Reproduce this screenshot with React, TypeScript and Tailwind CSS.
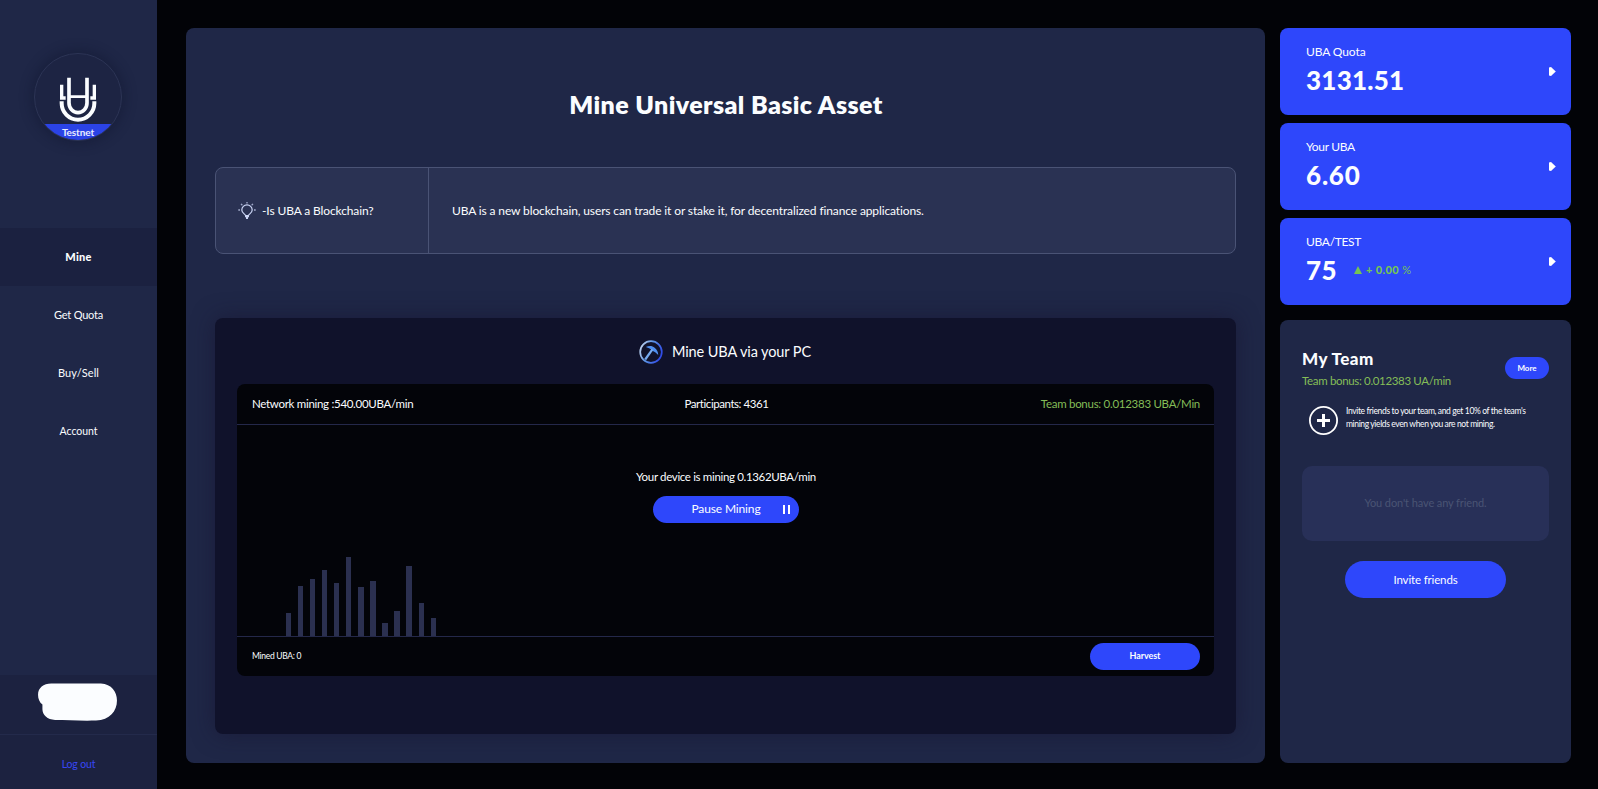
import type { ReactNode } from "react";

const navItems = [
	{ label: "Get Quota", className: "h-[58px] text-[11px] tracking-[-0.2px]" },
	{ label: "Buy/Sell", className: "h-[58px] text-[11px] tracking-[0.1px]" },
	{ label: "Account", className: "h-[60px] text-[10.5px] tracking-[-0.05px]" },
];

const bars = [23, 50, 57, 66, 53, 79, 49, 55, 13, 25, 70, 33, 18];

function Logo() {
	return (
		<div className="flex h-[88px] w-[88px] shrink-0 flex-col items-center justify-between overflow-hidden rounded-full border border-[#2c3455] bg-[#1d2443] shadow-[0_0_12px_3px_rgba(16,20,44,0.4)]">
			<svg
				aria-hidden="true"
				className="mt-[22px] h-[46px] w-[40px]"
				fill="none"
				stroke="#fbfdff"
				viewBox="176 138 120 138"
			>
				<path d="M209 143V219a27 29 0 0 0 54 0V143" strokeWidth="11" />
				<path d="M209 200H263" strokeWidth="8" />
				<path d="M187 164V204H199" strokeWidth="10" />
				<path d="M285 164V204H273" strokeWidth="10" />
				<path d="M187 214V220a49 49 0 0 0 98 0V214" strokeWidth="12" />
			</svg>
			<div className="flex h-4 w-full items-center justify-center bg-[#2b43e6] font-bold text-[#e8ecff] text-[10px] leading-none tracking-[-0.1px]">
				Testnet
			</div>
		</div>
	);
}

function Sidebar() {
	return (
		<aside className="flex w-[157px] shrink-0 flex-col items-center bg-[#1f2747]">
			<div className="h-[228px] pt-[53px] pr-px">
				<Logo />
			</div>
			<nav className="w-full text-center">
				<a className="flex h-[58px] items-center justify-center bg-[#1b2140] font-black text-[11px] tracking-[0.25px]">
					Mine
				</a>
				{navItems.map(({ label, className }) => (
					<a
						className={`flex items-center justify-center ${className}`}
						key={label}
					>
						{label}
					</a>
				))}
			</nav>
			<div className="mt-auto flex h-[114px] w-full flex-col bg-[#1c2240]">
				<div className="flex h-[60px] justify-center border-[#232a4b] border-b pt-2 pr-[2px]">
					<svg aria-hidden="true" className="h-[38px] w-[81px]" viewBox="0 0 82 39">
						<path
							d="M14 0.500H65C76 1 81.500 9 81.500 18C81.500 29 74 38 60 38.500C45 39 30 38 18 38C10 37.500 5 33 5 27V22C2 20 0.500 16 0.500 12C0.500 5 6 0.500 14 0.500Z"
							fill="#fbfdff"
						/>
					</svg>
				</div>
				<a className="flex flex-1 items-center justify-center pt-[6px] text-[#3846f5] text-[10.5px] tracking-[-0.15px]">
					Log out
				</a>
			</div>
		</aside>
	);
}

function BulbIcon() {
	return (
		<svg
			aria-hidden="true"
			className="h-[18px] w-[18px] shrink-0"
			fill="none"
			stroke="#ccd6f6"
			viewBox="0 0 18 18"
		>
			<path
				d="M7.500 13.500C7.200 12 3.800 11 3.800 7.900a5.200 5 0 0 1 10.400 0C14.200 11 10.800 12 10.500 13.500Z"
				strokeWidth="1.200"
			/>
			<path d="M7 14.300h4M8 16.200h2" strokeWidth="1.800" />
			<path
				d="M9 0v1.600M3 1.900l1.400 1.400M15 1.900l-1.400 1.400M0.300 8H2M16 8h1.700"
				opacity="0.75"
				strokeWidth="1.300"
			/>
		</svg>
	);
}

function PickaxeIcon() {
	return (
		<svg aria-hidden="true" className="h-6 w-6" fill="none" viewBox="0 0 24 24">
			<defs>
				<linearGradient id="pick" x1="0" x2="1" y1="0.2" y2="0.6">
					<stop offset="0" stopColor="#c3d4ee" />
					<stop offset="0.450" stopColor="#5a93e6" />
					<stop offset="1" stopColor="#2f4ae8" />
				</linearGradient>
			</defs>
			<circle cx="12" cy="12" r="10.800" stroke="url(#pick)" strokeWidth="1.700" />
			<path
				d="M6.800 7C10.500 5.300 13.500 5.900 15.600 7.800C18 9.700 19.200 12 19.200 15C17 12.600 15.300 11.500 13.500 10.700C11.800 9.200 9.700 7.900 6.800 7Z"
				fill="#4f8ff0"
			/>
			<path d="M13.400 9.300L6.200 19.500" stroke="#76aaf0" strokeWidth="2.200" />
		</svg>
	);
}

function MiningPanel() {
	return (
		<section className="flex h-[416px] flex-col rounded-lg bg-[#10122b] px-[22px] shadow-[0_0_22px_rgba(24,20,48,0.6)]">
			<h2 className="flex h-[66px] items-center justify-center gap-[9px] pt-[2px] pr-px text-[14.5px] tracking-[-0.1px]">
				<PickaxeIcon />
				Mine UBA via your PC
			</h2>
			<div className="flex h-[292px] flex-col rounded-lg bg-[#030409] text-[11.5px]">
				<div className="grid h-[41px] grid-cols-3 items-center border-[#24284a] border-b pr-[14px] pl-[15px]">
					<span className="tracking-[-0.3px]">Network mining :540.00UBA/min</span>
					<span className="pl-px text-center tracking-[-0.44px]">
						Participants: 4361
					</span>
					<span className="text-right text-[#84bd57] tracking-[-0.28px]">
						Team bonus: 0.012383 UBA/Min
					</span>
				</div>
				<div className="flex flex-1 flex-col items-center justify-between pt-[44px]">
					<div className="flex flex-col items-center gap-[11px] pl-px">
						<p className="leading-4 tracking-[-0.34px]">
							Your device is mining 0.1362UBA/min
						</p>
						<button
							className="grid h-[27px] w-[146px] grid-cols-[1fr_auto_1fr] items-center rounded-full bg-[#2e47fb] text-[12px] tracking-[-0.14px]"
							type="button"
						>
							<span />
							<span className="pb-px">Pause Mining</span>
							<span className="flex justify-end gap-[3px] pr-[9px]">
								<span className="h-[9px] w-[2px] bg-white" />
								<span className="h-[9px] w-[2px] bg-white" />
							</span>
						</button>
					</div>
					<div className="flex h-20 w-full items-end gap-[6.600px] pl-[48.500px]">
						{bars.map((height, index) => (
							<div
								className="w-[5.500px] bg-[#2b3050]"
								key={index}
								style={{ height }}
							/>
						))}
					</div>
				</div>
				<div className="flex h-10 items-center justify-between border-[#24284a] border-t pr-[14px] pl-[15px]">
					<span className="text-[8.500px] tracking-[-0.3px]">Mined UBA: 0</span>
					<button
						className="h-[27px] w-[110px] rounded-full bg-[#2e47fb] pb-px font-bold text-[9px] tracking-[-0.1px]"
						type="button"
					>
						Harvest
					</button>
				</div>
			</div>
		</section>
	);
}

type StatCardProps = Readonly<{
	label: string;
	labelClass: string;
	value: string;
	valueClass: string;
	children?: ReactNode;
}>;

function StatCard({ label, labelClass, value, valueClass, children }: StatCardProps) {
	return (
		<div className="flex h-[87px] items-center justify-between rounded-lg bg-[#2e47fb] pr-[15px] pl-[26px]">
			<div className="flex h-full flex-col gap-[6px] pt-4">
				<p className={`text-[12px] leading-4 ${labelClass}`}>{label}</p>
				<div className="flex items-center gap-4">
					<p className={`font-black text-[26px] leading-7 ${valueClass}`}>
						{value}
					</p>
					{children}
				</div>
			</div>
			<svg aria-hidden="true" className="h-[9px] w-[7px]" viewBox="0 0 7 9">
				<path d="M0 0.500L2 0L6.800 4.500L2 9L0 8.500Z" fill="#fff" />
			</svg>
		</div>
	);
}

function TeamPanel() {
	return (
		<section className="mt-[15px] flex flex-1 flex-col items-center rounded-lg bg-[#1f2747] px-[22px] pt-[29px]">
			<div className="flex w-full items-start justify-between">
				<div>
					<h2 className="font-black text-[17px] leading-5 tracking-[0.45px]">
						My Team
					</h2>
					<p className="mt-1 text-[#84bd57] text-[11.5px] leading-4 tracking-[-0.34px]">
						Team bonus: 0.012383 UA/min
					</p>
				</div>
				<button
					className="mt-2 h-[22px] w-11 rounded-full bg-[#2e47fb] pb-px font-bold text-[8px]"
					type="button"
				>
					More
				</button>
			</div>
			<div className="mt-4 flex w-full items-center gap-2 pl-[7px]">
				<svg
					aria-hidden="true"
					className="h-[29px] w-[29px] shrink-0"
					fill="none"
					stroke="#fff"
					viewBox="0 0 29 29"
				>
					<circle cx="14.500" cy="14.500" r="13.600" strokeWidth="1.800" />
					<path d="M8 14.500H21M14.500 8V21" strokeWidth="3" />
				</svg>
				<p className="whitespace-nowrap pb-1 text-[8.500px] leading-[13px] tracking-[-0.37px]">
					Invite friends to your team, and get 10% of the team's
					<br />
					mining yields even when you are not mining.
				</p>
			</div>
			<div className="mt-[31px] flex h-[75px] w-full items-center justify-center rounded-[10px] bg-[#283058] text-[#4a5474] text-[11px] tracking-[-0.1px]">
				You don't have any friend.
			</div>
			<button
				className="mt-5 h-[37px] w-[161px] rounded-full bg-[#2e47fb] text-[11.5px] tracking-[-0.15px]"
				type="button"
			>
				Invite friends
			</button>
		</section>
	);
}

export default function App() {
	return (
		<div className="flex h-[789px] w-[1598px] overflow-hidden bg-[#020307] font-[Lato,sans-serif] text-[#fbfdff]">
			<Sidebar />
			<main className="mt-7 ml-[29px] h-[735px] w-[1079px] rounded-lg bg-[#1f2747] px-[29px]">
				<h1 className="h-[139px] pt-[58px] pl-px text-center font-extrabold text-[25px] leading-9 tracking-[0.4px]">
					Mine Universal Basic Asset
				</h1>
				<div className="mb-[64px] flex h-[87px] rounded-lg border border-[#4a5375] bg-[#2a3253] text-[12px] tracking-[-0.12px]">
					<div className="flex w-[213px] items-center gap-[6px] border-[#4a5375] border-r pl-[22px]">
						<BulbIcon />
						-Is UBA a Blockchain?
					</div>
					<p className="flex items-center pl-[23px]">
						UBA is a new blockchain, users can trade it or stake it, for
						decentralized finance applications.
					</p>
				</div>
				<MiningPanel />
			</main>
			<div className="mt-7 ml-[15px] flex h-[735px] w-[291px] flex-col">
				<div className="flex flex-col gap-2">
					<StatCard
						label="UBA Quota"
						labelClass="tracking-[-0.1px]"
						value="3131.51"
						valueClass="tracking-[0.25px]"
					/>
					<StatCard
						label="Your UBA"
						labelClass="tracking-[-0.33px]"
						value="6.60"
						valueClass="tracking-[0.8px]"
					/>
					<StatCard
						label="UBA/TEST"
						labelClass="tracking-[-0.32px]"
						value="75"
						valueClass="tracking-[0.4px]"
					>
						<span className="flex items-center gap-1 pl-px text-[#74c455]">
							<svg aria-hidden="true" className="h-2 w-2" viewBox="0 0 8 8">
								<path d="M4 0L8 8H0Z" fill="currentColor" />
							</svg>
							<span className="font-black text-[11px] tracking-[0.4px]">
								+ 0.00 <span className="font-normal">%</span>
							</span>
						</span>
					</StatCard>
				</div>
				<TeamPanel />
			</div>
		</div>
	);
}
